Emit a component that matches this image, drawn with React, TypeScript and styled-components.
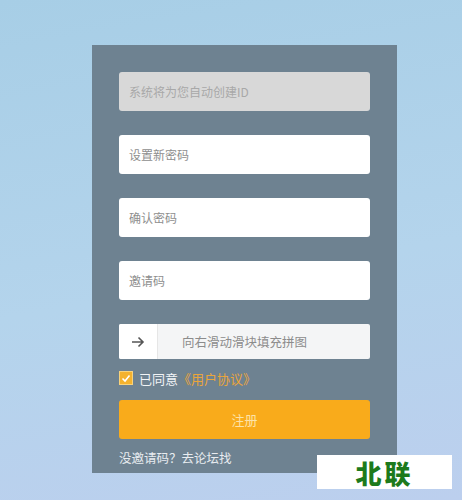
import React from "react";
import styled, { createGlobalStyle } from "styled-components";

const Global = createGlobalStyle`
  html, body { margin: 0; padding: 0; }
  body {
    width: 462px; height: 500px; overflow: hidden;
    font-family: "Noto Sans CJK SC", "Noto Sans", sans-serif;
    background: linear-gradient(170deg, #a7cee6 0%, #b4d4ec 55%, #bccfee 100%);
  }
`;

const Page = styled.div`
  position: relative;
  width: 462px;
  height: 500px;
  box-sizing: border-box;
  padding: 45px 0 0 92px;
`;

const Panel = styled.div`
  width: 305px;
  height: 428px;
  box-sizing: border-box;
  background: #6e8291;
  padding: 27px 27px 0 27px;
  display: flex;
  flex-direction: column;
`;

const Field = styled.div<{ $disabled?: boolean; $gap: number }>`
  height: 39px;
  flex-shrink: 0;
  margin-top: ${(p) => p.$gap}px;
  border-radius: 3px;
  background: ${(p) => (p.$disabled ? "#d8d8d8" : "#ffffff")};
  display: flex;
  align-items: center;
  padding-left: 10px;
  font-size: 12px;
  color: ${(p) => (p.$disabled ? "#a8a8a8" : "#8e8e8e")};
`;

const Slider = styled.div`
  position: relative;
  flex-shrink: 0;
  margin-top: 24px;
  height: 35px;
  border-radius: 2px;
  background: #f4f5f6;
  display: flex;
  align-items: center;
  justify-content: center;
  font-size: 12.5px;
  color: #8c8c8c;
`;

const Handle = styled.div`
  position: absolute;
  left: 0;
  top: 0;
  bottom: 0;
  width: 38px;
  background: #ffffff;
  border-right: 1px solid #e6e6e6;
  border-radius: 2px 0 0 2px;
  display: flex;
  align-items: center;
  justify-content: center;
`;

const AgreeRow = styled.div`
  margin-top: 11px;
  height: 16px;
  display: flex;
  align-items: center;
  gap: 6px;
  font-size: 13px;
  color: #f2f4f6;
`;

const Check = styled.span`
  width: 12px;
  height: 12px;
  background: #f3b22f;
  border: 1px solid #f8d37c;
  display: flex;
  align-items: center;
  justify-content: center;
`;

const Link = styled.span`
  color: #eaa53b;
  margin-left: -6px;
`;

const Submit = styled.div`
  margin-top: 14px;
  height: 39px;
  flex-shrink: 0;
  border-radius: 3px;
  background: #f9ab1b;
  color: #fde3a8;
  font-size: 13px;
  display: flex;
  align-items: center;
  justify-content: center;
`;

const Footer = styled.div`
  margin-top: 9px;
  font-size: 12.5px;
  color: #e8ecf0;
`;

const Badge = styled.div`
  position: absolute;
  left: 317px;
  top: 455px;
  width: 135px;
  height: 34px;
  background: #ffffff;
  display: flex;
  align-items: center;
  justify-content: center;
  font-size: 26px;
  font-weight: 900;
  color: #1d7a1c;
  letter-spacing: 3px;
`;

export default function App() {
  return (
    <>
      <Global />
      <Page>
        <Panel>
          <Field $disabled $gap={0}>系统将为您自动创建ID</Field>
          <Field $gap={24}>设置新密码</Field>
          <Field $gap={24}>确认密码</Field>
          <Field $gap={24}>邀请码</Field>
          <Slider>
            <Handle>
              <svg width="14" height="12" viewBox="0 0 14 12">
                <path d="M1 6h11M7.5 1.5L12 6l-4.5 4.5" stroke="#555" strokeWidth="1.6" fill="none" />
              </svg>
            </Handle>
            向右滑动滑块填充拼图
          </Slider>
          <AgreeRow>
            <Check>
              <svg width="10" height="9" viewBox="0 0 10 9">
                <path d="M1.5 4.5l2.5 2.5 4.5-5.5" stroke="#fff" strokeWidth="1.6" fill="none" />
              </svg>
            </Check>
            已同意
            <Link>《用户协议》</Link>
          </AgreeRow>
          <Submit>注册</Submit>
          <Footer>没邀请码？去论坛找</Footer>
        </Panel>
        <Badge>北联</Badge>
      </Page>
    </>
  );
}
